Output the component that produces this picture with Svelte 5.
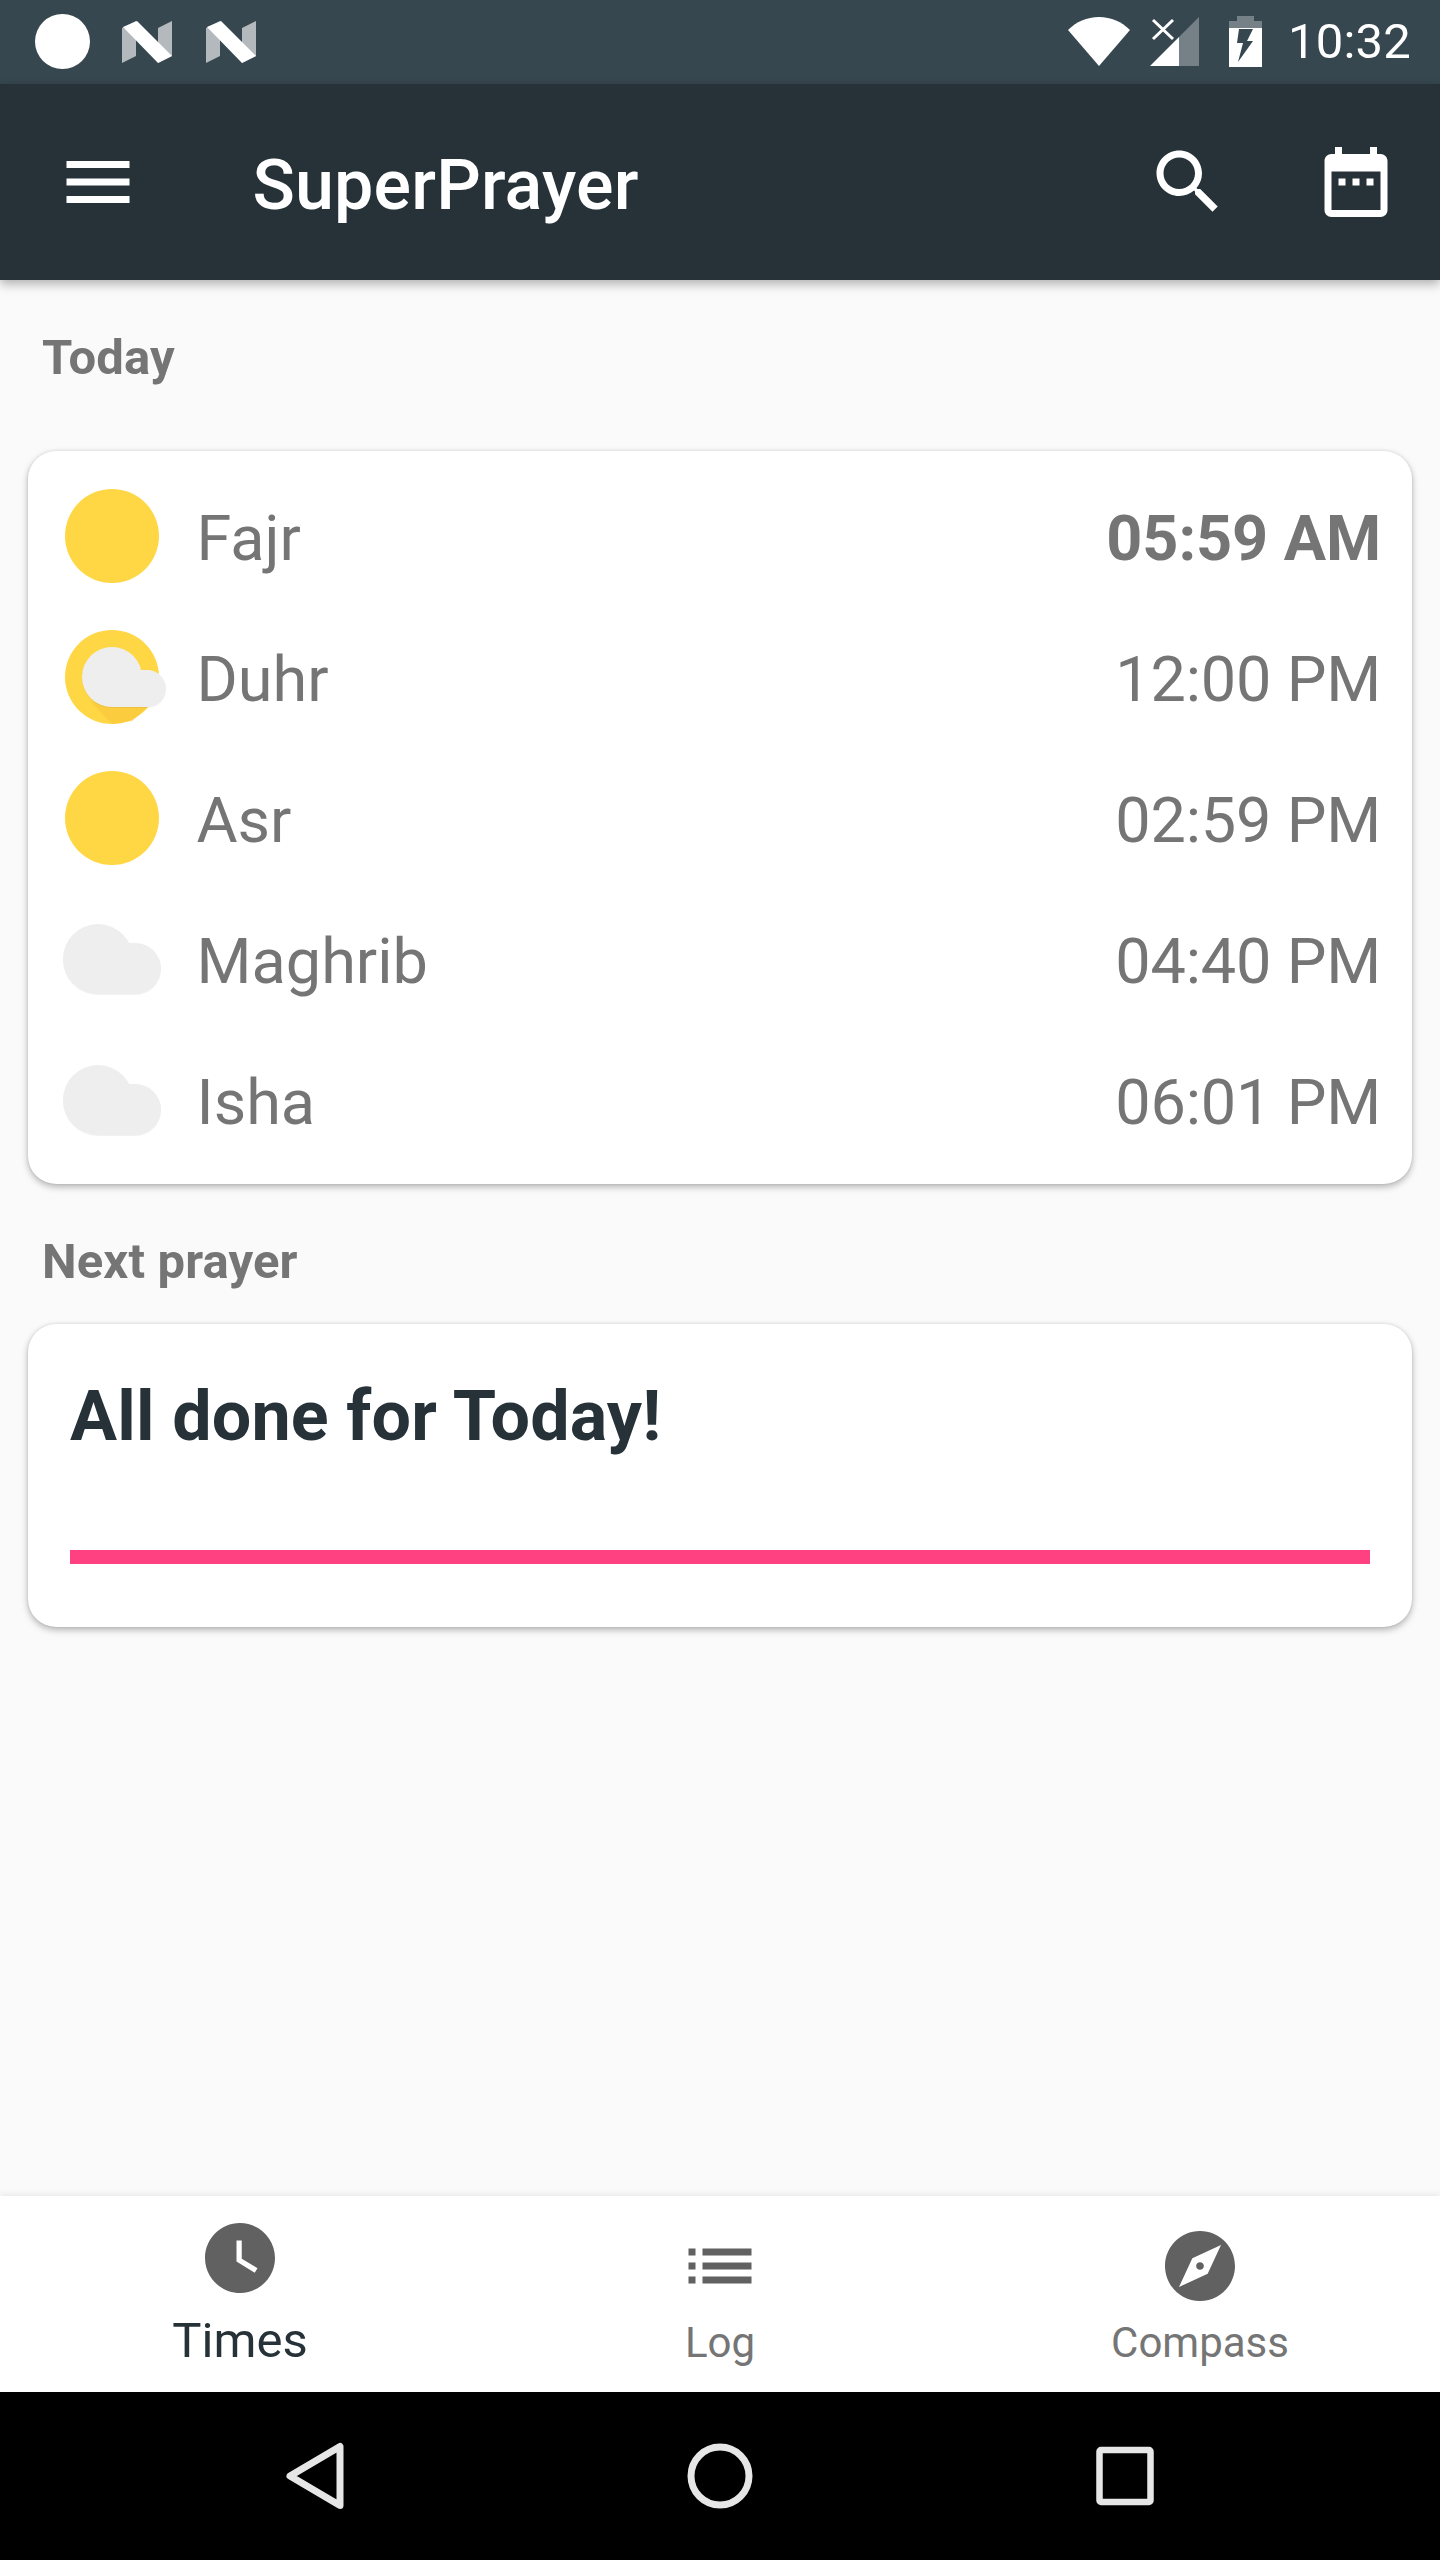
<script>
  const prayers = [
    { name: 'Fajr', time: '05:59 AM', icon: 'sun', current: true },
    { name: 'Duhr', time: '12:00 PM', icon: 'partly' },
    { name: 'Asr', time: '02:59 PM', icon: 'sun' },
    { name: 'Maghrib', time: '04:40 PM', icon: 'cloud' },
    { name: 'Isha', time: '06:01 PM', icon: 'cloud' }
  ];
</script>

{#snippet nLogo()}
  <svg class="n" viewBox="0 0 50 42" aria-hidden="true">
    <path d="M0 7 14 0V35L0 42Z" fill="#b3b9bc" />
    <path d="M36 7 50 0V35L36 42Z" fill="#b3b9bc" />
    <path d="M1 6 15 0 50 35 36 42Z" fill="#fff" />
  </svg>
{/snippet}

<div class="screen">
  <div class="status">
    <span class="dot"></span>
    {@render nLogo()}
    {@render nLogo()}
    <div class="status-right">
      <svg class="wifi" viewBox="0 0 62 49" aria-hidden="true">
        <path d="M0 13C8 5 19 0 31 0S54 5 62 13L31 49Z" fill="#fff" />
      </svg>
      <svg class="signal" viewBox="0 0 49 49" aria-hidden="true">
        <path d="M29 20 49 0V49H29Z" fill="#758187" />
        <path d="M0 49 29 20V49Z" fill="#fff" />
        <path d="M3 3 23 22M23 3 3 22" stroke="#fff" stroke-width="3" fill="none" />
      </svg>
      <svg class="battery" viewBox="0 0 33 51" aria-hidden="true">
        <path d="M8 0H25V5H33V12H0V5H8Z" fill="#758187" />
        <path fill-rule="evenodd" d="M0 12H33V51H0ZM10 13H24L18 25H24L9 46 14 27H8Z" fill="#fff" />
      </svg>
      <span class="clock">10:32</span>
    </div>
  </div>

  <header class="appbar">
    <svg class="icon" viewBox="0 0 24 24" aria-hidden="true">
      <path d="M3 18h18v-2H3v2zm0-5h18v-2H3v2zm0-7v2h18V6H3z" fill="#fff" />
    </svg>
    <h1>SuperPrayer</h1>
    <svg class="icon search" viewBox="0 0 24 24" aria-hidden="true">
      <path d="M15.5 14h-.79l-.28-.27C15.41 12.59 16 11.11 16 9.5 16 5.91 13.09 3 9.5 3S3 5.91 3 9.5 5.91 16 9.5 16c1.61 0 3.09-.59 4.23-1.57l.27.28v.79l5 4.99L20.49 19l-4.99-5zm-6 0C7.01 14 5 11.99 5 9.5S7.01 5 9.5 5 14 7.01 14 9.5 11.99 14 9.5 14z" fill="#fff" />
    </svg>
    <svg class="icon calendar" viewBox="0 0 24 24" aria-hidden="true">
      <path d="M9 11H7v2h2v-2zm4 0h-2v2h2v-2zm4 0h-2v2h2v-2zm2-7h-1V2h-2v2H8V2H6v2H5c-1.11 0-1.99.9-1.99 2L3 20c0 1.1.89 2 2 2h14c1.1 0 2-.9 2-2V6c0-1.1-.9-2-2-2zm0 16H5V9h14v11z" fill="#fff" />
    </svg>
  </header>

  <main>
    <h2 class="label first">Today</h2>
    <section class="card times">
      {#each prayers as p}
        <div class="row">
          <svg class="weather" viewBox="0 0 112 112" aria-hidden="true">
            {#if p.icon === 'sun' || p.icon === 'partly'}
              <circle cx="56" cy="56" r="47" fill="#ffd644" />
            {/if}
            {#if p.icon === 'partly'}
              <path d="M34 80 56 86H91L76 100 56 103Z" fill="#f9c83c" opacity=".7" />
              <g class="puff">
                <circle cx="56" cy="56" r="30" />
                <circle cx="91.5" cy="67.5" r="18.5" />
                <rect x="56" y="49" width="35.5" height="37" />
              </g>
            {/if}
            {#if p.icon === 'cloud'}
              <g class="puff">
                <circle cx="42" cy="56" r="35" />
                <circle cx="79.5" cy="65.5" r="25.5" />
                <rect x="42" y="40" width="37.5" height="51" />
              </g>
            {/if}
          </svg>
          <span class="name">{p.name}</span>
          <span class="time" class:current={p.current}>{p.time}</span>
        </div>
      {/each}
    </section>

    <h2 class="label">Next prayer</h2>
    <section class="card next">
      <h3>All done for Today!</h3>
      <div class="progress"></div>
    </section>
  </main>

  <nav class="tabs">
    <div class="tab active">
      <svg class="icon" viewBox="0 0 24 24" aria-hidden="true">
        <path d="M12 2C6.5 2 2 6.5 2 12s4.5 10 10 10 10-4.5 10-10S17.5 2 12 2zm4.2 14.2L11 13V7h1.5v5.2l4.5 2.7-.8 1.3z" fill="#616161" />
      </svg>
      <span>Times</span>
    </div>
    <div class="tab">
      <svg class="icon" viewBox="0 0 24 24" aria-hidden="true">
        <path d="M3 13h2v-2H3v2zm0 4h2v-2H3v2zm0-8h2V7H3v2zm4 4h14v-2H7v2zm0 4h14v-2H7v2zM7 7v2h14V7H7z" fill="#616161" />
      </svg>
      <span>Log</span>
    </div>
    <div class="tab">
      <svg class="icon" viewBox="0 0 24 24" aria-hidden="true">
        <path d="M12 10.9c-.61 0-1.1.49-1.1 1.1s.49 1.1 1.1 1.1c.61 0 1.1-.49 1.1-1.1s-.49-1.1-1.1-1.1zM12 2C6.48 2 2 6.48 2 12s4.48 10 10 10 10-4.48 10-10S17.52 2 12 2zm2.19 12.19L6 18l3.81-8.19L18 6l-3.81 8.19z" fill="#616161" />
      </svg>
      <span>Compass</span>
    </div>
  </nav>

  <div class="sysnav">
    <svg viewBox="0 0 84 84" aria-hidden="true">
      <path d="M17 42 67 12.500V71.500Z" fill="none" stroke="#e6e6e6" stroke-width="7" stroke-linejoin="round" />
    </svg>
    <svg viewBox="0 0 84 84" aria-hidden="true">
      <circle cx="42" cy="42" r="29" fill="none" stroke="#e6e6e6" stroke-width="7" />
    </svg>
    <svg viewBox="0 0 84 84" aria-hidden="true">
      <rect x="16.500" y="16" width="51" height="52" rx="1.500" fill="none" stroke="#e6e6e6" stroke-width="6.500" />
    </svg>
  </div>
</div>

<style>
  :global(body) {
    margin: 0;
    background: #fafafa;
  }

  .screen {
    width: 1440px;
    height: 2560px;
    display: flex;
    flex-direction: column;
    overflow: hidden;
    font-family: Roboto, "Liberation Sans", sans-serif;
    background: #fafafa;
    color: #757575;
  }

  .icon {
    width: 84px;
    height: 84px;
    flex: none;
    display: block;
  }

  .status {
    height: 84px;
    flex: none;
    display: flex;
    align-items: flex-start;
    background: #37474f;
    color: #fff;
    padding-left: 35px;
    box-sizing: border-box;
  }

  .dot {
    width: 55px;
    height: 55px;
    margin-top: 14px;
    border-radius: 50%;
    background: #fff;
    margin-right: 32px;
  }

  .n {
    width: 50px;
    height: 42px;
    margin-top: 21px;
    margin-right: 34px;
  }

  .status-right {
    margin-left: auto;
    display: flex;
    align-items: flex-start;
    padding-right: 29px;
  }

  .wifi {
    width: 62px;
    height: 49px;
    margin-top: 17px;
    margin-right: 20px;
  }

  .signal {
    width: 49px;
    height: 49px;
    margin-top: 17px;
    margin-right: 30px;
  }

  .battery {
    width: 33px;
    height: 51px;
    margin-top: 16px;
    margin-right: 26px;
  }

  .clock {
    font-size: 49px;
    line-height: 84px;
    letter-spacing: 0.2px;
  }

  .appbar {
    height: 196px;
    flex: none;
    display: flex;
    align-items: center;
    background: #263238;
    padding: 0 42.5px 0 56px;
    box-sizing: border-box;
    box-shadow: 0 4px 10px rgba(0, 0, 0, 0.3);
    position: relative;
    z-index: 1;
  }

  h1 {
    margin: 0 auto 0 112.5px;
    padding-top: 6px;
    font-size: 70px;
    font-weight: 500;
    color: #fff;
    line-height: 84px;
    letter-spacing: 0.15px;
  }

  .search {
    margin-right: 84px;
  }

  main {
    flex: 1;
    padding: 0 28px;
  }

  .label {
    margin: 50px 0 34px 14px;
    font-size: 49px;
    line-height: 56px;
    font-weight: 700;
    color: #757575;
    letter-spacing: 0.15px;
  }

  .label.first {
    margin-bottom: 65px;
  }

  .card {
    background: #fff;
    border-radius: 28px;
    box-shadow: 0 3px 7px rgba(0, 0, 0, 0.28), 0 0 3px rgba(0, 0, 0, 0.1);
  }

  .times {
    padding: 14px 0;
  }

  .row {
    height: 141px;
    display: flex;
    align-items: center;
    padding: 0 31px 0 28px;
    font-size: 63px;
  }

  .weather {
    width: 112px;
    height: 112px;
    flex: none;
  }

  .puff {
    fill: #eeeeee;
    filter: drop-shadow(0 1px 0 rgba(0, 0, 0, 0.05));
  }

  .name,
  .time {
    padding-top: 6px;
  }

  .name {
    margin-left: 28.5px;
  }

  .time {
    margin-left: auto;
    letter-spacing: -0.2px;
  }

  .time.current {
    font-weight: 700;
    letter-spacing: -0.1px;
  }

  .next {
    padding: 50px 42px 63px;
  }

  h3 {
    margin: 0 0 92px;
    font-size: 70px;
    line-height: 84px;
    font-weight: 700;
    color: #263238;
    letter-spacing: 0.17px;
  }

  .progress {
    height: 14px;
    background: #ff4081;
  }

  .tabs {
    height: 196px;
    flex: none;
    display: grid;
    grid-template-columns: repeat(3, 1fr);
    background: #fff;
    box-shadow: 0 -2px 6px rgba(0, 0, 0, 0.07);
  }

  .tab {
    display: flex;
    flex-direction: column;
    align-items: center;
    padding-top: 28px;
    font-size: 42px;
    line-height: 56px;
    color: #757575;
  }

  .tab span {
    margin-top: 7px;
  }

  .tab.active {
    padding-top: 20px;
    font-size: 49px;
    color: #263238;
  }

  .tab.active span {
    margin-top: 13px;
  }

  .sysnav {
    height: 168px;
    flex: none;
    display: grid;
    grid-template-columns: repeat(3, 405px);
    justify-content: center;
    justify-items: center;
    align-items: center;
    background: #000;
  }

  .sysnav svg {
    width: 84px;
    height: 84px;
    display: block;
  }
</style>
